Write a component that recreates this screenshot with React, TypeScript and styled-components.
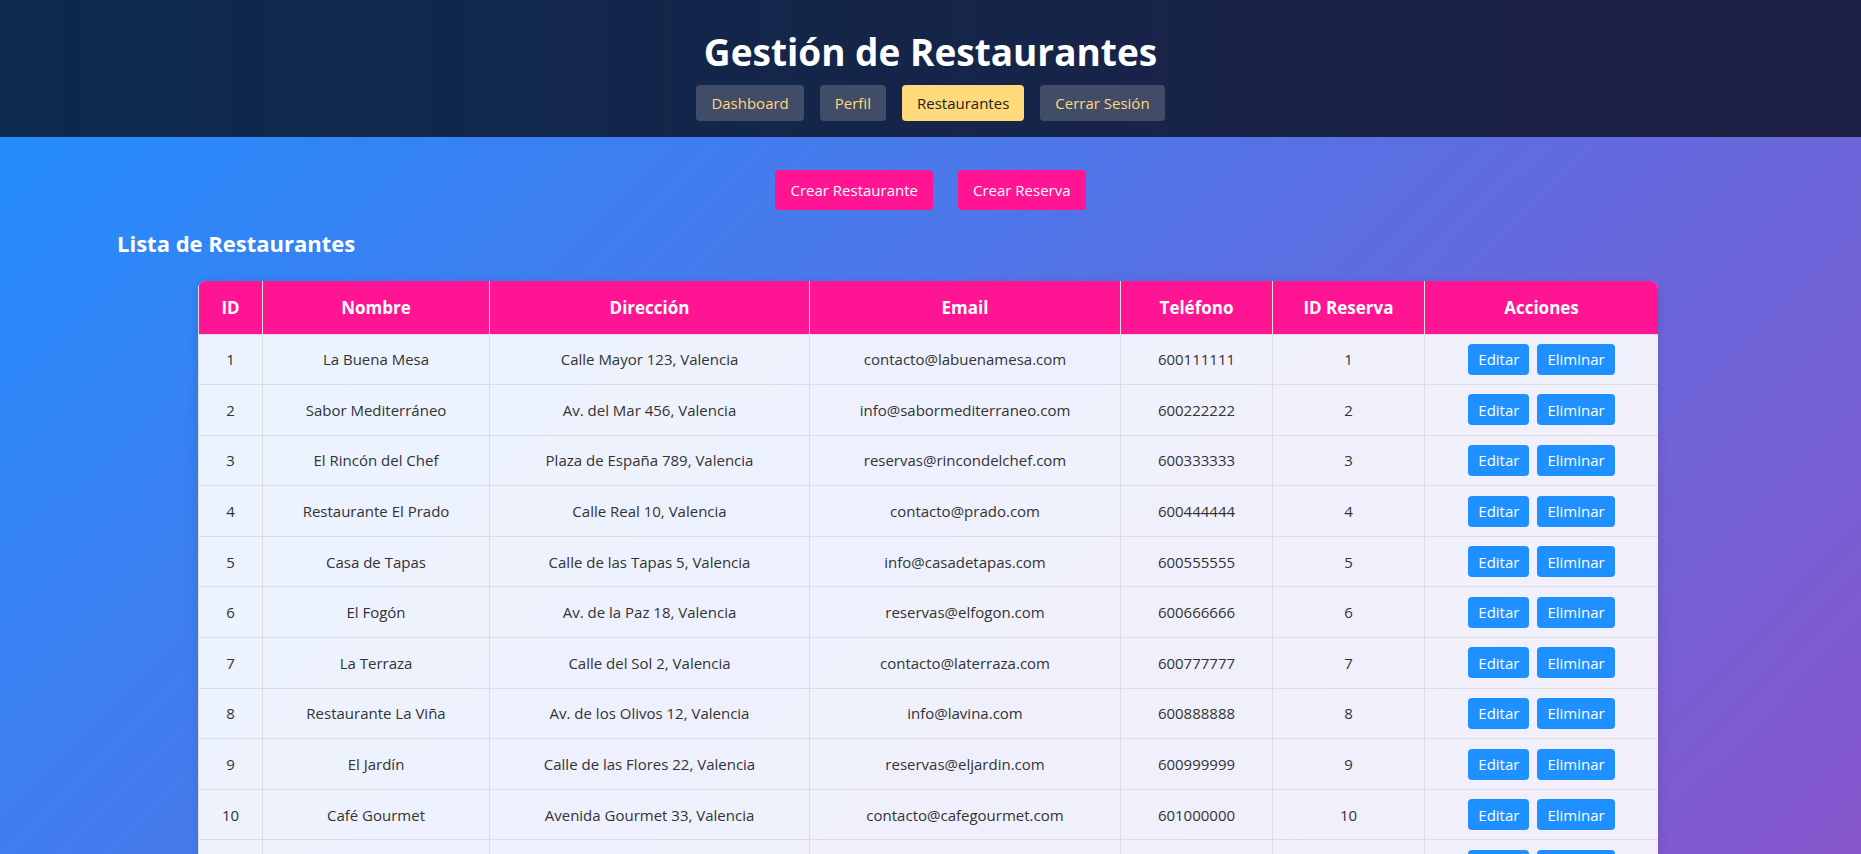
import styled, { createGlobalStyle } from "styled-components";

const GlobalStyle = createGlobalStyle`
  * { box-sizing: border-box; }
  html, body { margin: 0; padding: 0; }
  body {
    font-family: "Segoe UI", "Open Sans", "Noto Sans", sans-serif;
    background: linear-gradient(135deg, #1f8fff 0%, #8756cc 100%);
    background-attachment: fixed;
    min-height: 100vh;
    color: #333;
  }
`;

const Header = styled.header`
  background: linear-gradient(90deg, #0c2a4e 0%, #1f2045 100%);
  padding: 28px 0 16px;
  text-align: center;
`;

const Title = styled.h1`
  margin: 0 0 9px;
  color: #fff;
  font-size: 37px;
  font-weight: 700;
  line-height: 48px;
`;

const Nav = styled.nav`
  display: flex;
  justify-content: center;
  gap: 16px;
`;

const NavButton = styled.button<{ $active?: boolean }>`
  border: none;
  border-radius: 4px;
  padding: 0 15px;
  height: 36px;
  font-family: inherit;
  font-size: 15px;
  cursor: pointer;
  background: ${(p) => (p.$active ? "#ffda7a" : "#414c68")};
  color: ${(p) => (p.$active ? "#222" : "#ffd97a")};
`;

const Main = styled.main`
  padding: 33px 117px 40px;
`;

const Actions = styled.div`
  display: flex;
  justify-content: center;
  gap: 25px;
`;

const PinkButton = styled.button`
  border: none;
  border-radius: 4px;
  background: #ff1493;
  color: #fff;
  height: 40px;
  padding: 0 15px;
  font-family: inherit;
  font-size: 15px;
  cursor: pointer;
`;

const SectionTitle = styled.h2`
  margin: 19px 0 23px;
  color: #fff;
  font-size: 22px;
  font-weight: 700;
  line-height: 29px;
`;

const TableWrap = styled.div`
  width: 1460px;
  margin: 0 0 0 81px;
  border-radius: 8px;
  overflow: hidden;
  box-shadow: 0 4px 12px rgba(0, 0, 0, 0.12);
`;

const Table = styled.table`
  width: 100%;
  border-collapse: collapse;
  table-layout: fixed;
  background: rgba(255, 255, 255, 0.9);
`;

const Th = styled.th`
  background: #ff1493;
  color: #fff;
  font-size: 17px;
  font-weight: 700;
  height: 53px;
  padding: 0 10px;
  border: 1px solid #ddd;
  border-top: none;
  text-align: center;
`;

const Td = styled.td`
  height: 50.6px;
  padding: 0 10px;
  border: 1px solid #ddd;
  text-align: center;
  font-size: 15px;
  color: #333;
`;

const SmallButton = styled.button`
  border: none;
  border-radius: 4px;
  background: #1e90ff;
  color: #fff;
  height: 31px;
  padding: 0 10px;
  margin: 0 4px;
  font-family: inherit;
  font-size: 15px;
  cursor: pointer;
`;

const cols = [64, 227, 320, 311, 152, 152, 234];
const heads = ["ID", "Nombre", "Dirección", "Email", "Teléfono", "ID Reserva", "Acciones"];

const rows = [
  [1, "La Buena Mesa", "Calle Mayor 123, Valencia", "contacto@labuenamesa.com", "600111111", 1],
  [2, "Sabor Mediterráneo", "Av. del Mar 456, Valencia", "info@sabormediterraneo.com", "600222222", 2],
  [3, "El Rincón del Chef", "Plaza de España 789, Valencia", "reservas@rincondelchef.com", "600333333", 3],
  [4, "Restaurante El Prado", "Calle Real 10, Valencia", "contacto@prado.com", "600444444", 4],
  [5, "Casa de Tapas", "Calle de las Tapas 5, Valencia", "info@casadetapas.com", "600555555", 5],
  [6, "El Fogón", "Av. de la Paz 18, Valencia", "reservas@elfogon.com", "600666666", 6],
  [7, "La Terraza", "Calle del Sol 2, Valencia", "contacto@laterraza.com", "600777777", 7],
  [8, "Restaurante La Viña", "Av. de los Olivos 12, Valencia", "info@lavina.com", "600888888", 8],
  [9, "El Jardín", "Calle de las Flores 22, Valencia", "reservas@eljardin.com", "600999999", 9],
  [10, "Café Gourmet", "Avenida Gourmet 33, Valencia", "contacto@cafegourmet.com", "601000000", 10],
  [11, "Mesón del Puerto", "Calle del Puerto 7, Valencia", "info@mesondelpuerto.com", "601111111", 11],
  [12, "La Parrilla", "Av. del Cid 40, Valencia", "reservas@laparrilla.com", "601222222", 12],
];

export default function App() {
  return (
    <>
      <GlobalStyle />
      <Header>
        <Title>Gestión de Restaurantes</Title>
        <Nav>
          <NavButton>Dashboard</NavButton>
          <NavButton>Perfil</NavButton>
          <NavButton $active>Restaurantes</NavButton>
          <NavButton>Cerrar Sesión</NavButton>
        </Nav>
      </Header>
      <Main>
        <Actions>
          <PinkButton>Crear Restaurante</PinkButton>
          <PinkButton>Crear Reserva</PinkButton>
        </Actions>
        <SectionTitle>Lista de Restaurantes</SectionTitle>
        <TableWrap>
          <Table>
            <colgroup>
              {cols.map((w, i) => (
                <col key={i} style={{ width: w }} />
              ))}
            </colgroup>
            <thead>
              <tr>
                {heads.map((h) => (
                  <Th key={h}>{h}</Th>
                ))}
              </tr>
            </thead>
            <tbody>
              {rows.map((r) => (
                <tr key={r[0]}>
                  {r.map((c, i) => (
                    <Td key={i}>{c}</Td>
                  ))}
                  <Td>
                    <SmallButton>Editar</SmallButton>
                    <SmallButton>Eliminar</SmallButton>
                  </Td>
                </tr>
              ))}
            </tbody>
          </Table>
        </TableWrap>
      </Main>
    </>
  );
}
